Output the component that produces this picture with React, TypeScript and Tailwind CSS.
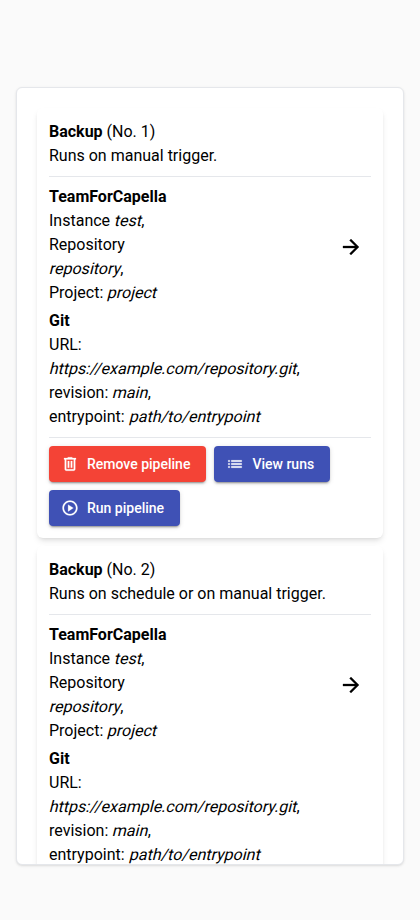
import React from "react";

const icons = {
  trash: "M7 21q-.825 0-1.412-.587T5 19V6H4V4h5V3h6v1h5v2h-1v13q0 .825-.587 1.413T17 21zM17 6H7v13h10zM9 17h2V8H9zm4 0h2V8h-2z",
  list: "M3 9V7h2v2zm0 4v-2h2v2zm0 4v-2h2v2zM7 9V7h14v2zm0 4v-2h14v2zm0 4v-2h14v2z",
  play: "M9.500 16.500l7-4.500-7-4.500v9zM12 2C6.480 2 2 6.480 2 12s4.480 10 10 10 10-4.480 10-10S17.520 2 12 2zm0 18c-4.410 0-8-3.590-8-8s3.590-8 8-8 8 3.590 8 8-3.590 8-8 8z",
  arrow: "M16.175 13H4v-2h12.175l-5.600-5.600L12 4l8 8-8 8-1.425-1.400z",
};

function Icon({ name, className }: { name: keyof typeof icons; className: string }) {
  return (
    <svg viewBox="0 0 24 24" fill="currentColor" stroke="currentColor" strokeWidth="0.3" className={className}>
      <path d={icons[name]} />
    </svg>
  );
}

function Em({ children }: { children: React.ReactNode }) {
  return <i className="inline-block origin-[0_16px] -skew-x-[14deg] not-italic">{children}</i>;
}

function Button({ icon, label, warn = false }: { icon: keyof typeof icons; label: string; warn?: boolean }) {
  return (
    <button
      className={
        "flex h-9 items-center rounded pr-4 pl-3 text-sm font-medium text-white shadow-[0_3px_1px_-2px_rgba(0,0,0,0.2),0_2px_2px_0_rgba(0,0,0,0.14),0_1px_5px_0_rgba(0,0,0,0.12)] " +
        (warn ? "bg-[#f44336]" : "bg-[#3f51b5]")
      }
    >
      <Icon name={icon} className="mr-2 size-[18px]" />
      <span>{label}</span>
    </button>
  );
}

function Pipeline({ no, trigger }: { no: number; trigger: string }) {
  return (
    <div className="rounded-md bg-white p-3 shadow-md">
      <div>
        <b>Backup</b> (No. {no})<br />
        {trigger}
      </div>
      <hr className="my-2 border-gray-200" />
      <div className="flex items-center justify-between">
        <div className="mb-1 w-[126px]">
          <b>TeamForCapella</b><br />
          Instance <Em>test</Em>,<br />
          Repository <Em>repository</Em>,<br />
          Project: <Em>project</Em>
        </div>
        <Icon name="arrow" className="mr-2 size-6" />
      </div>
      <div>
        <b>Git</b><br />
        URL: <br /><Em>https://example.com/repository.git</Em>,<br />
        revision: <Em>main</Em>,<br />
        entrypoint: <Em>path/to/entrypoint</Em>
      </div>
      <hr className="my-2 border-gray-200" />
      <div className="flex flex-wrap gap-2">
        <Button icon="trash" label="Remove pipeline" warn />
        <Button icon="list" label="View runs" />
        <Button icon="play" label="Run pipeline" />
      </div>
    </div>
  );
}

export default function App() {
  return (
    <div className="flex h-[920px] flex-col bg-[#fafafa] px-4 pt-[87px] pb-[55px] font-['Roboto',sans-serif] text-base text-black">
      <div className="flex h-[778px] flex-col gap-2 overflow-hidden rounded-md border border-gray-200 bg-white px-5 pt-5 shadow-sm">
        <Pipeline no={1} trigger="Runs on manual trigger." />
        <Pipeline no={2} trigger="Runs on schedule or on manual trigger." />
      </div>
    </div>
  );
}
